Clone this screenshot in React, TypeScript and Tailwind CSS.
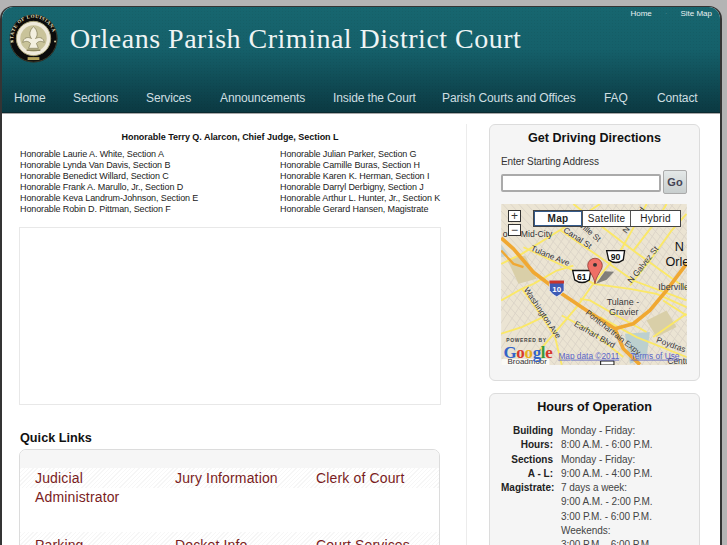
import React from "react";

const nav: [string, string][] = [
  ["Home", "w-[59px]"],
  ["Sections", "w-[73px]"],
  ["Services", "w-[74px]"],
  ["Announcements", "w-[113px]"],
  ["Inside the Court", "w-[109px]"],
  ["Parish Courts and Offices", "w-[162px]"],
  ["FAQ", "w-[53px]"],
  ["Contact", "w-[50px]"],
];

const left = [
  "Honorable Laurie A. White, Section A",
  "Honorable Lynda Van Davis, Section B",
  "Honorable Benedict Willard, Section C",
  "Honorable Frank A. Marullo, Jr., Section D",
  "Honorable Keva Landrum-Johnson, Section E",
  "Honorable Robin D. Pittman, Section F",
];
const right = [
  "Honorable Julian Parker, Section G",
  "Honorable Camille Buras, Section H",
  "Honorable Karen K. Herman, Section I",
  "Honorable Darryl Derbigny, Section J",
  "Honorable Arthur L. Hunter, Jr., Section K",
  "Honorable Gerard Hansen, Magistrate",
];

const stripes =
  "bg-[repeating-linear-gradient(135deg,#f6f6f6_0px,#f6f6f6_1px,#ffffff_1px,#ffffff_3px)]";

function Seal() {
  return (
    <svg width="49" height="49" viewBox="0 0 100 100" className="shrink-0">
      <defs>
        <path id="sealArc" d="M 10 58 A 41 41 0 1 1 90 58" fill="none" />
      </defs>
      <circle cx="50" cy="50" r="49" fill="#0b0b0b" />
      <circle cx="50" cy="50" r="48" fill="none" stroke="#6d6a4d" strokeWidth="1" />
      <text fontSize="10" fontWeight="700" fill="#e8e2c2" fontFamily="'Liberation Serif', serif" letterSpacing="1.1">
        <textPath href="#sealArc">STATE OF LOUISIANA</textPath>
      </text>
      <circle cx="6" cy="56" r="2" fill="#d8d0a0" />
      <circle cx="94" cy="56" r="2" fill="#d8d0a0" />
      <circle cx="50" cy="50" r="35" fill="#efeadb" stroke="#a8a278" strokeWidth="2" />
      <circle cx="50" cy="50" r="27" fill="#c9c39a" />
      <path d="M50 26 C42 32 40 44 46 50 C38 46 30 48 28 58 C36 54 40 56 44 60 L40 70 H60 L56 60 C60 56 64 54 72 58 C70 48 62 46 54 50 C60 44 58 32 50 26Z" fill="#f3efdf" stroke="#7f7a55" strokeWidth="1.4" />
      <path d="M36 74 H64" stroke="#8d875f" strokeWidth="3" />
      <rect x="38" y="88" width="24" height="6" fill="#b6a45a" />
    </svg>
  );
}

function MapCanvas() {
  const major = [
    "M100 140 L250 210 L310 250 L420 265 L500 280 L590 320",
    "M210 88 L330 170 L430 240 L590 300",
    "M250 10 L345 85 L430 150 L590 265",
    "M33 190 L95 160 L215 85 L330 10",
    "M95 265 L150 340 L195 410 L215 493",
    "M140 460 L260 320 L310 250 L395 145 L470 10",
    "M420 255 L480 180 L545 90 L590 40",
    "M215 345 L300 390 L400 470",
    "M330 350 L440 410 L590 470",
    "M270 295 L300 300 L370 340 L470 395",
    "M490 410 L590 340",
    "M130 250 L200 210 L250 195",
    "M520 300 L590 345",
    "M33 300 L95 265 L130 250",
    "M430 150 L500 60 L530 10",
    "M33 400 L95 380 L170 345",
  ];
  return (
    <svg width="186" height="161" viewBox="33 10 558 484" className="block" fontFamily="'Liberation Sans', sans-serif">
      <rect x="33" y="10" width="558" height="484" fill="#ebe4d3" />
      <g stroke="#d9d2c6" strokeWidth="2.5" fill="none">
        {Array.from({ length: 34 }, (_, i) => (
          <path key={i} d={`M${i * 24 - 100} 500 L${i * 24 + 220} 0`} />
        ))}
        {Array.from({ length: 34 }, (_, i) => (
          <path key={"b" + i} d={`M${i * 24 - 260} 0 L${i * 24 + 200} 500`} />
        ))}
      </g>
      <path d="M50 175 L105 165 L140 235 L85 250Z" fill="#d9cfa8" />
      <path d="M470 360 L530 330 L560 380 L500 410Z" fill="#d9cfa8" />
      <path d="M405 400 L480 395 L470 470 L420 490Z" fill="#bcd0cf" />
      <path d="M33 130 L55 165 L33 170Z" fill="#c5d3d4" />
      <path d="M370 350 L420 345 L410 365Z" fill="#e4cfcb" />
      <g stroke="#fbe866" strokeWidth="5.5" fill="none">
        {major.map((d) => <path key={d} d={d} />)}
      </g>
      <g stroke="#f0a832" strokeWidth="11" fill="none" strokeLinejoin="round">
        <path d="M33 112 L70 145 L130 215 L215 280 L290 330 L375 385 L430 370 L480 330 L530 270 L590 190" />
        <path d="M375 385 L400 445 L450 493" />
        <path d="M33 150 L70 190 L100 200" strokeWidth="7" />
      </g>
      <g fontSize="26" fill="#333" stroke="#fff" strokeWidth="0.5" paintOrder="stroke">
        <text x="38" y="110" fontSize="26" fill="#222">o</text>
        <text x="92" y="110">Mid-City</text>
        <text transform="translate(218 93) rotate(33)" fontSize="25">Canal St</text>
        <text transform="translate(268 78) rotate(40)" fontSize="25">ville St</text>
        <text transform="translate(120 150) rotate(22)" fontSize="25">Tulane Ave</text>
        <text transform="translate(100 268) rotate(56)" fontSize="25">Washington Ave</text>
        <text transform="translate(250 375) rotate(30)" fontSize="25">Earhart Blvd</text>
        <text transform="translate(285 340) rotate(38)" fontSize="24">Pontchartrain Expy</text>
        <text transform="translate(425 250) rotate(-52)" fontSize="25">N Galvez St</text>
        <text transform="translate(410 100) rotate(-52)" fontSize="25">N Broad</text>
        <text transform="translate(498 425) rotate(20)" fontSize="25">Poydras St</text>
        <text x="350" y="313" fontSize="27">Tulane -</text>
        <text x="357" y="343" fontSize="27">Gravier</text>
        <text x="505" y="270" fontSize="27">Iberville</text>
        <text x="555" y="150" fontSize="38" fill="#111" stroke="#fff">N</text>
        <text x="527" y="196" fontSize="38" fill="#111" stroke="#fff">Orle</text>
        <text x="533" y="492" fontSize="25">Centu</text>
      </g>
      {/* route shields */}
      <g>
        <path d="M350 150 H404 L400 178 Q378 194 356 178Z" fill="#fff" stroke="#111" strokeWidth="4" />
        <text x="377" y="177" textAnchor="middle" fontSize="26" fontWeight="700" fill="#111">90</text>
        <path d="M248 210 H302 L298 238 Q276 254 254 238Z" fill="#fff" stroke="#111" strokeWidth="4" />
        <text x="275" y="237" textAnchor="middle" fontSize="26" fontWeight="700" fill="#111">61</text>
        <path d="M332 482 H372 V494 H332Z" fill="#fff" stroke="#111" strokeWidth="3" />
        <path d="M178 240 H222 V270 Q212 284 200 289 Q188 284 178 270Z" fill="#3d5bb5" stroke="#fff" strokeWidth="2" />
        <rect x="178" y="240" width="44" height="9" fill="#c8352c" />
        <text x="200" y="276" textAnchor="middle" fontSize="24" fontWeight="700" fill="#fff">10</text>
      </g>
      {/* marker */}
      <path d="M318 250 L345 212 L372 214 L350 238Z" fill="#555" opacity="0.7" />
      <path d="M315 250 C312 225 293 210 293 195 A22 22 0 1 1 337 195 C337 210 318 225 315 250Z" fill="#ef6f66" stroke="#7a2a24" strokeWidth="2" />
      <circle cx="315" cy="193" r="6" fill="#333" />
      {/* google attribution */}
      <rect x="33" y="476" width="145" height="18" fill="#fff" opacity="0.8" />
      <text x="52" y="492" fontSize="24" fill="#333">Broadmoor</text>
      <text x="48" y="426" fontSize="15" fontWeight="700" fill="#444" letterSpacing="2">POWERED BY</text>
      <text x="40" y="473" fontSize="51" fontFamily="'Liberation Serif', serif" fontWeight="700" letterSpacing="-1">
        <tspan fill="#3464c8">G</tspan><tspan fill="#d8382c">o</tspan><tspan fill="#e8b020">o</tspan><tspan fill="#3464c8">g</tspan><tspan fill="#3a9a3a">l</tspan><tspan fill="#d8382c">e</tspan>
      </text>
      <text x="205" y="475" fontSize="25" fill="#5a63c8" textDecoration="underline">Map data ©2011</text>
      <text x="422" y="475" fontSize="25" fill="#5a63c8" textDecoration="underline">Terms of Use</text>
    </svg>
  );
}

function MapView() {
  return (
    <div className="relative w-[186px] h-[161px] overflow-hidden">
      <MapCanvas />
      <div className="absolute left-[7px] top-[6px] flex flex-col gap-[2px]">
        <div className="w-[13px] h-[12px] border border-[#333] bg-white flex items-center justify-center text-[12px] leading-none text-[#333]">+</div>
        <div className="w-[13px] h-[12px] border border-[#333] bg-white flex items-center justify-center text-[12px] leading-none text-[#333]">−</div>
      </div>
      <div className="absolute left-[32px] top-[6px] flex h-[17px] border border-[#444] text-[10px] leading-[14px] text-[#222] bg-white">
        <div className="w-[48px] text-center font-bold border border-[#345a8a] tracking-[0.3px]">Map</div>
        <div className="w-[49px] text-center border-x border-[#555] tracking-[0.2px] pt-px">Satellite</div>
        <div className="w-[49px] text-center tracking-[0.3px] pt-px">Hybrid</div>
      </div>
    </div>
  );
}

function Link({ children, className }: { children: React.ReactNode; className: string }) {
  return <a className={"block text-[14px] leading-[19px] tracking-[0.15px] text-[#7a1c22] " + className}>{children}</a>;
}

function HoursRow({ label, lines }: { label: string[]; lines: string[] }) {
  return (
    <div className="flex">
      <div className="w-[52px] text-right font-bold text-[#222]">
        {label.map((l) => <div key={l}>{l}</div>)}
      </div>
      <div className="ml-[8px] text-[#444] tracking-[-0.05px]">
        {lines.map((l) => <div key={l}>{l}</div>)}
      </div>
    </div>
  );
}

export default function App() {
  return (
    <div className="h-[545px] w-[727px] overflow-hidden bg-[#b4b4b4] pt-[6px] pr-[5px] font-['Liberation_Sans',Arial,sans-serif]">
      <div className="h-[539px] overflow-hidden rounded-t-[13px] border-x-2 border-t border-[#343434] bg-white">
        <header className="relative h-[106px] border-b border-[#0a2a30] bg-[radial-gradient(rgba(0,0,0,0.05)_1px,transparent_1px),linear-gradient(#17666f,#15606a_40%,#0b3942)] bg-[length:3px_3px,100%_100%]">
          <div className="flex items-center pl-[7px] pt-[7px]">
            <Seal />
            <h1 className="ml-[12px] mt-[1px] font-['Liberation_Serif',serif] text-[28px] leading-[34px] tracking-[0.5px] text-[#eef4f4] whitespace-nowrap">
              Orleans Parish Criminal District Court
            </h1>
          </div>
          <div className="absolute right-[8px] top-[2px] flex text-[8px] leading-[10px] text-[#e8f0f0]">
            <span>Home</span>
            <span className="mx-[13px] text-[#4f8a90]">·</span>
            <span>Site Map</span>
          </div>
          <nav className="absolute bottom-[7px] left-[12px] flex text-[12px] leading-[14px] tracking-[-0.12px] text-[#cfdfe1]">
            {nav.map(([n, w]) => (
              <a key={n} className={"block whitespace-nowrap " + w}>{n}</a>
            ))}
          </nav>
        </header>
        <div className="h-px bg-[#a8a8a8]" />
        <main className="flex">
          <section className="mt-[10px] h-[440px] w-[465px] shrink-0 border-r border-[#ececec] pl-[17px]">
            <div className="w-[422px]">
              <h2 className="pt-[7px] text-center text-[9px] leading-[12px] tracking-[-0.03px] font-bold text-[#111]">
                Honorable Terry Q. Alarcon, Chief Judge, Section L
              </h2>
              <div className="mt-[6px] flex pl-px text-[9px] leading-[11px] tracking-[-0.12px] text-[#222]">
                <div className="w-[260px] shrink-0">{left.map((t) => <div key={t}>{t}</div>)}</div>
                <div className="shrink-0 whitespace-nowrap">{right.map((t) => <div key={t}>{t}</div>)}</div>
              </div>
              <div className="mt-[12px] h-[178px] border border-[#e8e8e8] bg-white" />
              <h3 className="mt-[25px] pl-px text-[12.7px] leading-[16px] font-bold text-[#111]">Quick Links</h3>
              <div className="mt-[3px] h-[120px] w-[421px] overflow-hidden rounded-[7px] border border-[#dcdcdc]">
                <div className="h-[18px] bg-[#f6f6f6]" />
                <div className={"h-[20px] " + stripes} />
                <div className="mt-[-19px] grid grid-cols-[140px_141px_1fr] pl-[15px]">
                  <Link className="h-[63px] w-[110px]">Judicial Administrator</Link>
                  <Link className="">Jury Information</Link>
                  <Link className="">Clerk of Court</Link>
                </div>
                <div className={"h-[20px] " + stripes} />
                <div className="mt-[-16px] grid grid-cols-[140px_141px_1fr] pl-[15px]">
                  <Link className="">Parking</Link>
                  <Link className="">Docket Info</Link>
                  <Link className="">Court Services</Link>
                </div>
              </div>
            </div>
          </section>
          <aside className="w-[233px] shrink-0 pl-[22px]">
            <div className="mt-[10px] h-[257px] w-[211px] rounded-[6px] border border-[#dcdcdc] bg-[#f5f5f5] px-[11px]">
              <h2 className="pt-[5px] text-center text-[12.6px] leading-[17px] font-bold text-[#111]">Get Driving Directions</h2>
              <label className="mt-[8px] block text-[10px] leading-[14px] tracking-[-0.1px] text-[#333]">Enter Starting Address</label>
              <div className="mt-[1px] flex items-center gap-[2px]">
                <input className="mt-[1px] h-[18px] w-[160px] rounded-[2px] border-2 border-[#aaa] bg-white outline-none" />
                <button className="h-[24px] w-[24px] rounded-[2px] border border-[#aaa] bg-[linear-gradient(#e4e8e8,#c8cece)] text-[11px] font-bold text-[#445]">Go</button>
              </div>
              <div className="mt-[10px]"><MapView /></div>
            </div>
            <div className="mt-[12px] h-[200px] w-[211px] rounded-[6px] border border-[#dcdcdc] bg-[#f5f5f5] px-[11px] text-[10px] leading-[14.3px]">
              <h2 className="pt-[5px] text-center text-[12.6px] leading-[17px] font-bold text-[#111]">Hours of Operation</h2>
              <div className="mt-[8px]">
                <HoursRow label={["Building", "Hours:"]} lines={["Monday - Friday:", "8:00 A.M. - 6:00 P.M."]} />
                <HoursRow label={["Sections", "A - L:"]} lines={["Monday - Friday:", "9:00 A.M. - 4:00 P.M."]} />
                <HoursRow label={["Magistrate:"]} lines={["7 days a week:", "9:00 A.M. - 2:00 P.M.", "3:00 P.M. - 6:00 P.M.", "Weekends:", "3:00 P.M. - 6:00 P.M."]} />
              </div>
            </div>
          </aside>
        </main>
      </div>
    </div>
  );
}
